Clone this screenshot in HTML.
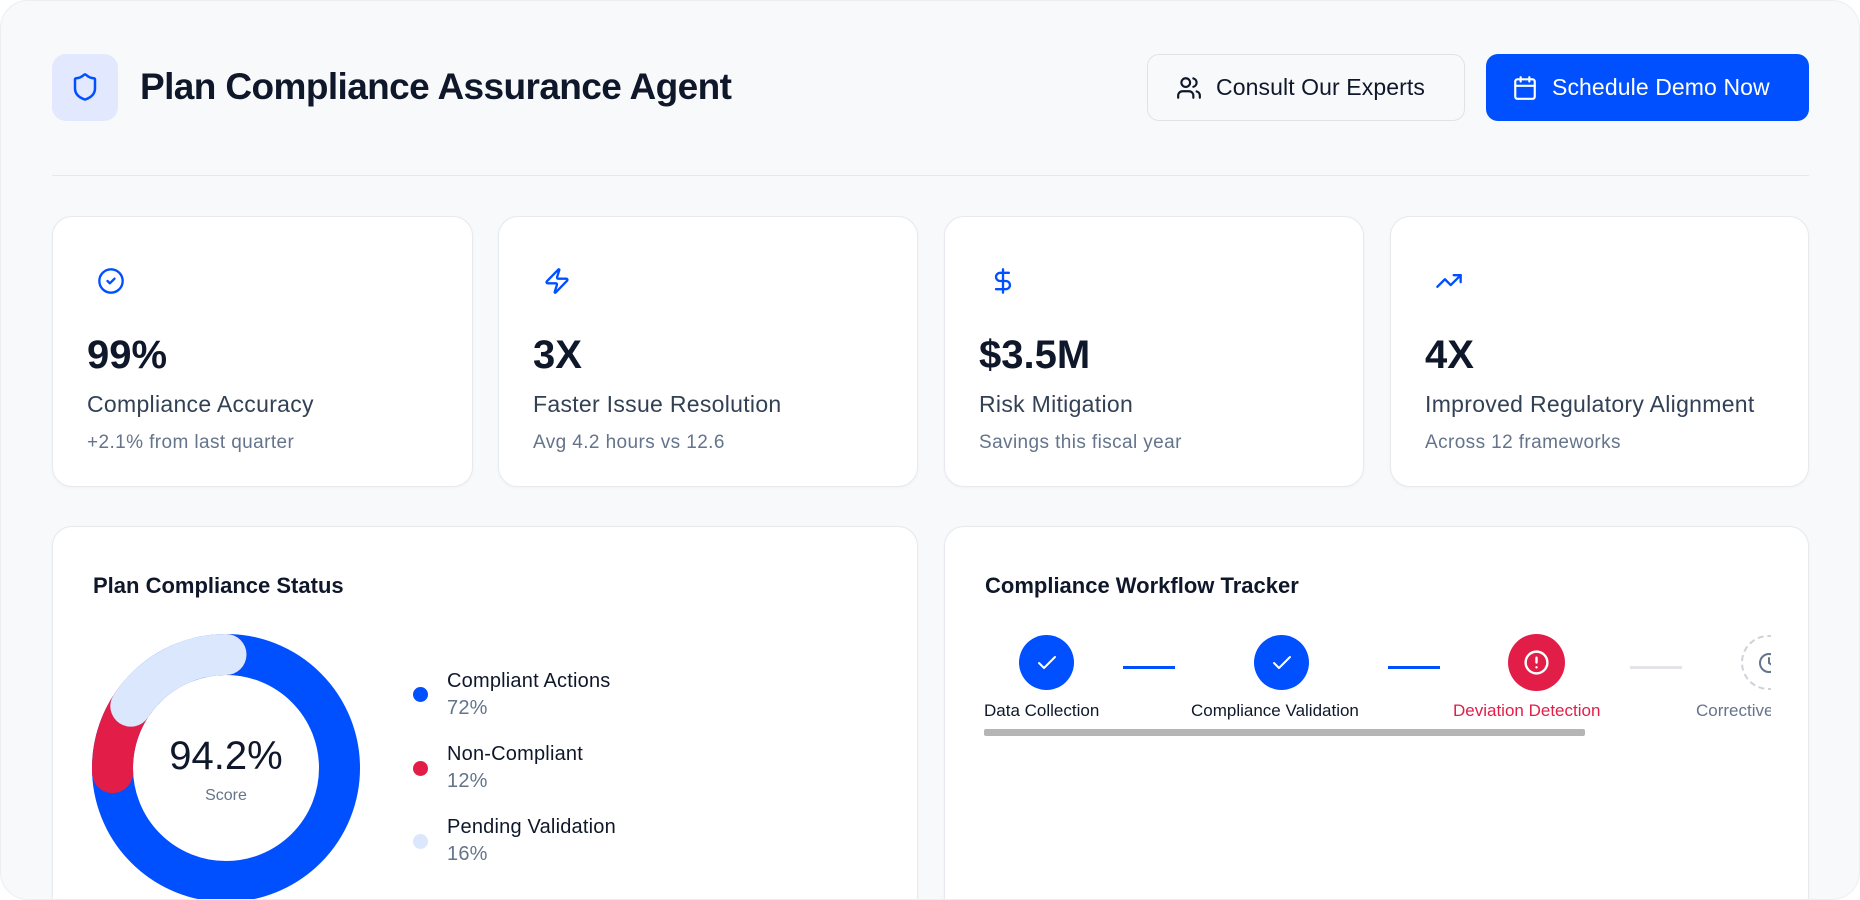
<!DOCTYPE html>
<html><head><meta charset="utf-8"><style>
*{box-sizing:border-box;margin:0;padding:0}
body{width:1860px;height:876px;overflow:hidden;background:#fff;font-family:"Liberation Sans",sans-serif;color:#0f172a}
.frame{position:absolute;left:0;top:0;width:1860px;height:900px;background:#f8f9fb;border:1px solid #eceef1;border-radius:28px;overflow:hidden}
.abs{position:absolute}
.card{position:absolute;background:#fff;border:1px solid #e6e9ee;border-radius:20px;box-shadow:0 1px 3px rgba(0,0,0,.04)}
.val{position:absolute;left:34px;top:116px;font-size:40px;font-weight:600;color:#0f172a}
.lbl{position:absolute;left:34px;top:174px;font-size:23px;letter-spacing:.3px;color:#334155}
.sub{position:absolute;left:34px;top:215px;font-size:19px;letter-spacing:.4px;color:#64748b}
.ic{position:absolute;left:44px;top:50px}
.btn{position:absolute;top:53px;height:67px;border-radius:12px;display:flex;align-items:center;font-size:23px;letter-spacing:.1px}
.lg{position:absolute;left:446px;font-size:20px;letter-spacing:.2px}
.st{position:absolute;top:80px;font-size:17px;font-weight:500;white-space:nowrap}
</style></head><body><div class="frame">
<div class="abs" style="left:51px;top:53px;width:66px;height:67px;background:#e2e8fd;border-radius:14px"></div>
<svg class="abs" style="left:69px;top:71px" width="30" height="30" viewBox="0 0 24 24" fill="none" stroke="#0050ff" stroke-width="2" stroke-linecap="round" stroke-linejoin="round"><path d="M20 13c0 5-3.5 7.5-7.660 8.95a1 1 0 0 1-.67-.01C7.5 20.5 4 18 4 13V6a1 1 0 0 1 1-1c2 0 4.5-1.2 6.24-2.72a1.17 1.17 0 0 1 1.52 0C14.51 3.81 17 5 19 5a1 1 0 0 1 1 1z"/></svg>
<div class="abs" style="left:139px;top:65px;font-size:37px;font-weight:600;letter-spacing:-0.6px">Plan Compliance Assurance Agent</div>

<div class="btn" style="left:1146px;width:318px;border:1px solid #dfe3e8;background:#f8f9fb;color:#0f172a;padding-left:28px">
<svg width="26" height="26" viewBox="0 0 24 24" fill="none" stroke="#0f172a" stroke-width="2" stroke-linecap="round" stroke-linejoin="round"><path d="M16 21v-2a4 4 0 0 0-4-4H6a4 4 0 0 0-4 4v2"/><circle cx="9" cy="7" r="4"/><path d="M22 21v-2a4 4 0 0 0-3-3.87"/><path d="M16 3.13a4 4 0 0 1 0 7.75"/></svg>
<span style="margin-left:14px">Consult Our Experts</span></div>
<div class="btn" style="left:1485px;width:323px;background:#0050ff;color:#fff;padding-left:26px">
<svg width="26" height="26" viewBox="0 0 24 24" fill="none" stroke="#fff" stroke-width="2" stroke-linecap="round" stroke-linejoin="round"><rect x="3" y="4" width="18" height="18" rx="2"/><path d="M16 2v4M8 2v4M3 10h18"/></svg>
<span style="margin-left:14px">Schedule Demo Now</span></div>

<div class="abs" style="left:51px;top:174px;width:1757px;height:1px;background:#e6e9ee"></div>

<div class="card" style="left:51px;top:215px;width:421px;height:271px">
<svg class="ic" width="28" height="28" viewBox="0 0 24 24" fill="none" stroke="#0050ff" stroke-width="2" stroke-linecap="round" stroke-linejoin="round"><circle cx="12" cy="12" r="10"/><path d="m9 12 2 2 4-4"/></svg>
<div class="val">99%</div><div class="lbl">Compliance Accuracy</div><div class="sub">+2.1% from last quarter</div></div>
<div class="card" style="left:497px;top:215px;width:420px;height:271px">
<svg class="ic" width="28" height="28" viewBox="0 0 24 24" fill="none" stroke="#0050ff" stroke-width="2" stroke-linecap="round" stroke-linejoin="round"><path d="M4 14a1 1 0 0 1-.78-1.63l9.9-10.2a.5.5 0 0 1 .86.46l-1.92 6.02A1 1 0 0 0 13 10h7a1 1 0 0 1 .78 1.63l-9.9 10.2a.5.5 0 0 1-.86-.46l1.92-6.02A1 1 0 0 0 11 14z"/></svg>
<div class="val">3X</div><div class="lbl">Faster Issue Resolution</div><div class="sub">Avg 4.2 hours vs 12.6</div></div>
<div class="card" style="left:943px;top:215px;width:420px;height:271px">
<svg class="ic" width="28" height="28" viewBox="0 0 24 24" fill="none" stroke="#0050ff" stroke-width="2" stroke-linecap="round" stroke-linejoin="round"><path d="M12 2v20M17 5H9.5a3.5 3.5 0 0 0 0 7h5a3.5 3.5 0 0 1 0 7H6"/></svg>
<div class="val">$3.5M</div><div class="lbl">Risk Mitigation</div><div class="sub">Savings this fiscal year</div></div>
<div class="card" style="left:1389px;top:215px;width:419px;height:271px">
<svg class="ic" width="28" height="28" viewBox="0 0 24 24" fill="none" stroke="#0050ff" stroke-width="2" stroke-linecap="round" stroke-linejoin="round"><path d="M22 7 13.5 15.5 8.5 10.5 2 17"/><path d="M16 7h6v6"/></svg>
<div class="val">4X</div><div class="lbl">Improved Regulatory Alignment</div><div class="sub">Across 12 frameworks</div></div>

<div class="card" style="left:51px;top:525px;width:866px;height:400px">
<div class="abs" style="left:40px;top:46px;font-size:22px;font-weight:600">Plan Compliance Status</div>
</div>
<svg class="abs" style="left:91px;top:633px" width="268" height="268" viewBox="0 0 268 268">
<g transform="rotate(-90 134 134)" fill="none" stroke-width="41">
<circle cx="134" cy="134" r="113.5" stroke="#0050ff"/>
<circle cx="134" cy="134" r="113.5" stroke="#e11d48" stroke-linecap="round" stroke-dasharray="0 530 80 1000" />
<circle cx="134" cy="134" r="113.5" stroke="#dbe7fd" stroke-linecap="round" stroke-dasharray="0 600 122 1000"/>
</g></svg>
<div class="abs" style="left:125px;top:733px;width:200px;text-align:center;font-size:40px;font-weight:500">94.2%</div>
<div class="abs" style="left:125px;top:786px;width:200px;text-align:center;font-size:16px;color:#64748b">Score</div>
<div class="abs" style="left:412px;top:686px;width:15px;height:15px;border-radius:50%;background:#0050ff"></div>
<div class="lg" style="top:669px">Compliant Actions</div>
<div class="lg" style="top:696px;color:#64748b">72%</div>
<div class="abs" style="left:412px;top:760px;width:15px;height:15px;border-radius:50%;background:#e11d48"></div>
<div class="lg" style="top:742px">Non-Compliant</div>
<div class="lg" style="top:769px;color:#64748b">12%</div>
<div class="abs" style="left:412px;top:833px;width:15px;height:15px;border-radius:50%;background:#dbe7fd"></div>
<div class="lg" style="top:815px">Pending Validation</div>
<div class="lg" style="top:842px;color:#64748b">16%</div>

<div class="card" style="left:943px;top:525px;width:865px;height:400px">
<div class="abs" style="left:40px;top:46px;font-size:22px;font-weight:600">Compliance Workflow Tracker</div>
</div>
<div class="abs" style="left:983px;top:620px;width:787px;height:120px;overflow:hidden">
<div class="abs" style="left:35px;top:14px;width:55px;height:55px;border-radius:50%;background:#0050ff"></div>
<svg class="abs" style="left:51px;top:30px" width="24" height="24" viewBox="0 0 24 24" fill="none" stroke="#fff" stroke-width="2" stroke-linecap="round" stroke-linejoin="round"><path d="M20 6 9 17l-5-5"/></svg>
<div class="abs" style="left:139px;top:45px;width:52px;height:3px;background:#0050ff"></div>
<div class="abs" style="left:270px;top:14px;width:55px;height:55px;border-radius:50%;background:#0050ff"></div>
<svg class="abs" style="left:286px;top:30px" width="24" height="24" viewBox="0 0 24 24" fill="none" stroke="#fff" stroke-width="2" stroke-linecap="round" stroke-linejoin="round"><path d="M20 6 9 17l-5-5"/></svg>
<div class="abs" style="left:404px;top:45px;width:52px;height:3px;background:#0050ff"></div>
<div class="abs" style="left:524px;top:13px;width:57px;height:57px;border-radius:50%;background:#e11d48"></div>
<svg class="abs" style="left:538px;top:27px" width="29" height="29" viewBox="0 0 24 24" fill="none" stroke="#fff" stroke-width="2" stroke-linecap="round" stroke-linejoin="round"><circle cx="12" cy="12" r="9"/><path d="M12 8v4M12 16h.01"/></svg>
<div class="abs" style="left:646px;top:45px;width:52px;height:3px;background:#e2e4e8"></div>
<div class="abs" style="left:757px;top:14px;width:55px;height:55px;border-radius:50%;border:2px dashed #cfd3d8"></div>
<svg class="abs" style="left:773px;top:30px" width="24" height="24" viewBox="0 0 24 24" fill="none" stroke="#64748b" stroke-width="2" stroke-linecap="round"><circle cx="12" cy="12" r="9"/><path d="M12 7v5l3 2"/></svg>
<div class="st" style="left:0">Data Collection</div>
<div class="st" style="left:207px">Compliance Validation</div>
<div class="st" style="left:469px;color:#e11d48">Deviation Detection</div>
<div class="st" style="left:712px;color:#64748b">Corrective Action</div>
<div class="abs" style="left:0;top:108px;width:601px;height:7px;background:#b5b5b5;border-radius:2px"></div>
</div>
</div></body></html>
